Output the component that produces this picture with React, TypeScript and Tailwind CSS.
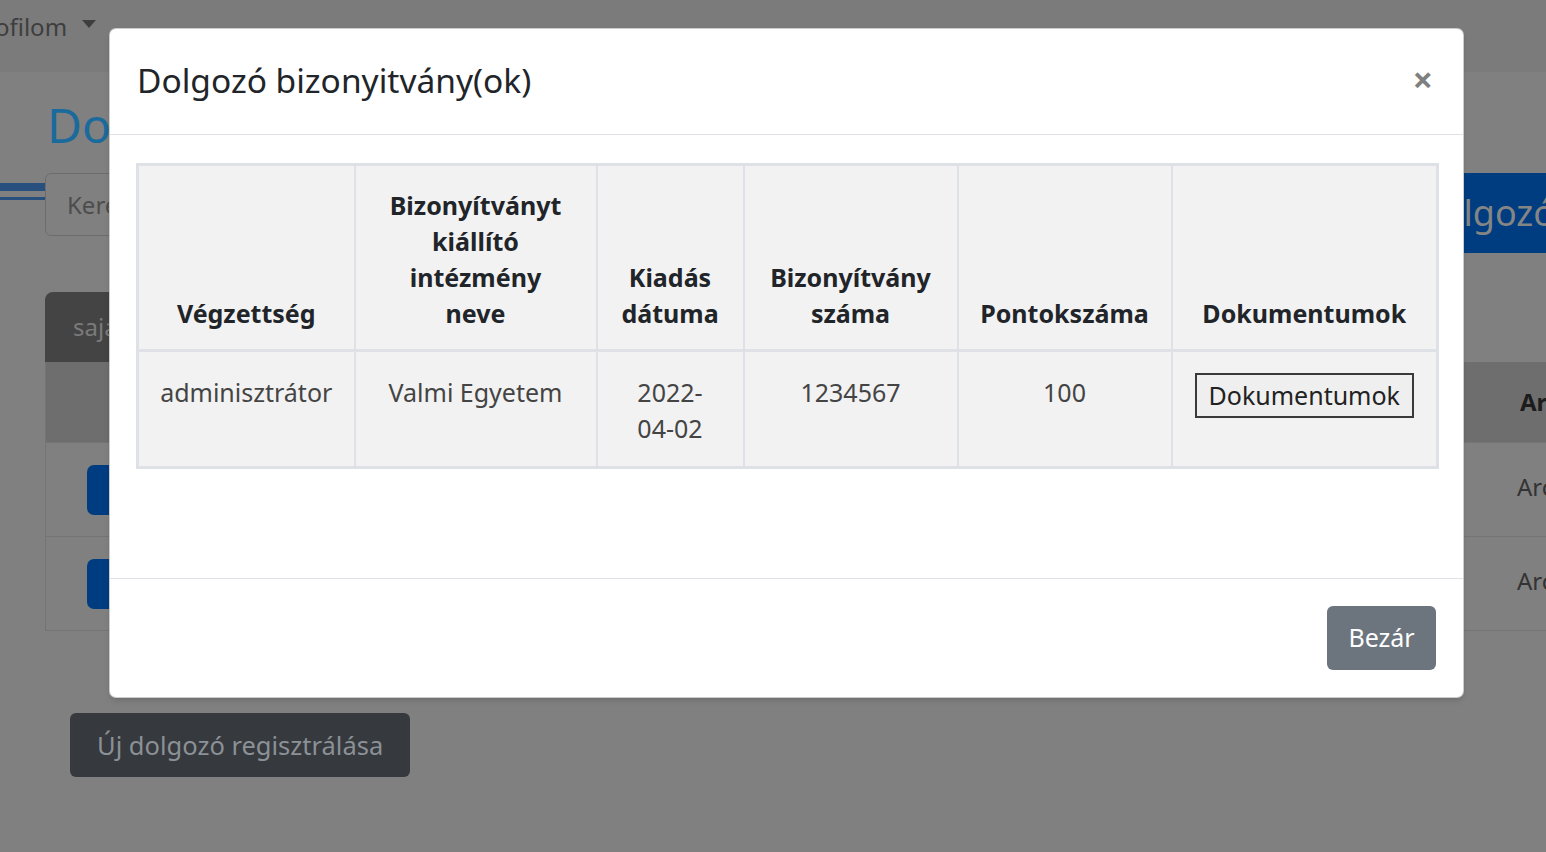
import React from 'react';

const headers: React.ReactNode[] = [
  'Végzettség',
  <>Bizonyítványt<br />kiállító<br />intézmény<br />neve</>,
  <>Kiadás<br />dátuma</>,
  <>Bizonyítvány<br />száma</>,
  'Pontokszáma',
  'Dokumentumok',
];

const colWidths = ['w-[217px]', 'w-[242px]', 'w-[147px]', 'w-[214px]', 'w-[214px]', 'w-[266px]'];

// the page that sits behind the backdrop, drawn in its dimmed colours
const BackgroundPage: React.FC = () => (
  <div className="flex flex-col">
    <nav className="h-[72px] bg-[#7b7b7b] flex items-start pt-[9px]">
      <span className="ml-[-29px] text-[24px] leading-[36px] text-[#3e3e3e] flex items-center">
        Profilom
        <span className="ml-[15px] mb-[6px] inline-block w-0 h-0 border-x-[7px] border-t-[8px] border-x-transparent border-t-[#3e3e3e]" />
      </span>
    </nav>

    <h2 className="mt-[24px] ml-[47px] text-[48px] leading-[58px] text-[#1b6a9c]">Dolgozók</h2>

    <div className="mt-[19px] flex items-start">
      <div className="w-[45px] shrink-0 pt-[10px] flex flex-col gap-[6px]">
        <div className="h-[8px] bg-[#27507f]" />
        <div className="h-[3px] bg-[#27507f]" />
      </div>
      <div className="flex-1 h-[63px] border-[1.5px] border-[#6c6c6c] rounded-[6px] flex items-center pl-[21px] text-[24px] text-[#4d4d4d]">
        Keresés...
      </div>
      <div className="ml-[40px] mr-[-27px] shrink-0 h-[80px] bg-[#003d80] rounded-[6px] flex items-center px-[18px] text-[36px] text-[#858585]">
        Dolgozó
      </div>
    </div>

    <div className="mt-[39px] ml-[45px] w-[300px] h-[70px] bg-[#444444] rounded-tl-[8px] rounded-tr-[8px] flex items-center pl-[28px] text-[24px] text-[#7a7a7a]">
      saját dolgozók
    </div>

    <div className="ml-[45px] border-l-[1.5px] border-b-[1.5px] border-[#747474]">
      <div className="h-[80px] bg-[#6e6e6e] flex items-center whitespace-nowrap">
        <div className="w-[1455px] shrink-0" />
        <span className="pl-[19px] text-[24px] font-bold text-[#1c1c1c]">Archív</span>
      </div>
      {[0, 1].map((i) => (
        <div key={i} className="h-[94px] border-t-[1.5px] border-[#747474] flex items-center whitespace-nowrap">
          <div className="w-[1455px] shrink-0 pl-[41px]">
            <div className="w-[110px] h-[50px] bg-[#003d80] rounded-[7px] flex items-center pl-[21px] text-[24px] text-[#8a8a8a]">
              Módosít
            </div>
          </div>
          <span className="pl-[16px] pb-[6px] text-[24px] text-[#333333]">Archivál</span>
        </div>
      ))}
    </div>

    <div className="mt-[82px] ml-[70px]">
      <button className="h-[64px] px-[27px] bg-[#36393d] rounded-[6px] text-[25.5px] text-[#8b9196]">
        Új dolgozó regisztrálása
      </button>
    </div>
  </div>
);

const CertificateModal: React.FC = () => (
  <div className="absolute left-[109px] top-[28px] w-[1355px] bg-white rounded-[7px] border border-black/20 shadow-md flex flex-col">
    <div className="h-[106px] border-b-[1.5px] border-[#dee2e6] flex items-center justify-between pl-[27px] pr-[30px]">
      <h5 className="text-[33.5px] leading-[45px] text-[#212529] -mt-[2px]">Dolgozó bizonyitvány(ok)</h5>
      <button className="text-[36px] leading-none font-bold text-black/50 -mt-[4px]">×</button>
    </div>

    <div className="h-[443px] px-[26px] pt-[28px]">
      <table className="w-[1300px] table-fixed border-collapse border-[3px] border-[#dee2e6] bg-[#f2f2f2] text-center">
        <colgroup>
          {colWidths.map((w, i) => (
            <col key={i} className={w} />
          ))}
        </colgroup>
        <thead>
          <tr>
            {headers.map((h, i) => (
              <th
                key={i}
                className="border-2 border-b-[3px] border-[#dee2e6] align-bottom px-[8px] pt-[21px] pb-[18px] text-[25px] leading-[36px] font-bold text-[#212529]"
              >
                {h}
              </th>
            ))}
          </tr>
        </thead>
        <tbody>
          <tr className="text-[25px] leading-[36px] text-[#444444]">
            <td className="border-2 border-[#dee2e6] align-top pt-[22px] pb-[20px]">adminisztrátor</td>
            <td className="border-2 border-[#dee2e6] align-top pt-[22px] pb-[20px]">Valmi Egyetem</td>
            <td className="border-2 border-[#dee2e6] align-top pt-[22px] pb-[20px]">2022-<br />04-02</td>
            <td className="border-2 border-[#dee2e6] align-top pt-[22px] pb-[20px]">1234567</td>
            <td className="border-2 border-[#dee2e6] align-top pt-[22px] pb-[20px]">100</td>
            <td className="border-2 border-[#dee2e6] align-top pt-[21px] pb-[20px]">
              <button className="h-[45px] w-[219px] border-2 border-[#3a3a3a] bg-[#efefef] text-[25px] leading-none text-[#222222]">
                Dokumentumok
              </button>
            </td>
          </tr>
        </tbody>
      </table>
    </div>

    <div className="h-[119px] border-t-[1.5px] border-[#dee2e6] flex items-center justify-end pr-[27px]">
      <button className="h-[64px] w-[109px] bg-[#6c757d] rounded-[6px] text-[25px] text-white">Bezár</button>
    </div>
  </div>
);

export default function App() {
  return (
    <div className="relative h-[852px] w-full overflow-hidden bg-[#808080] font-['Noto_Sans',sans-serif]">
      <BackgroundPage />
      <CertificateModal />
    </div>
  );
}
